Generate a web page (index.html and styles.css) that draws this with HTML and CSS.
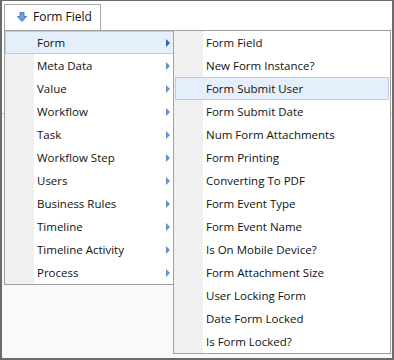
FILE: index.html
```html
<!DOCTYPE html>
<html lang="en">
<head>
  <meta charset="UTF-8">
  <title>Form Field Menu</title>
  <link rel="stylesheet" href="styles.css">
</head>
<body>
<div class="frame">
  <!-- Toolbar with the field picker -->
  <div class="toolbar">
    <button class="tab" type="button">
      <svg class="tab-icon" width="10" height="10" viewBox="0 0 10 10">
        <path d="M3 0.5 H7 V4.5 H9.5 L5 9.5 L0.5 4.5 H3 Z" fill="#6f9ee0" stroke="#4a7cc6" stroke-width="1"/>
      </svg>
      Form Field
    </button>
  </div>
  <div class="panel"></div>

  <!-- Main menu -->
  <ul class="menu main-menu">
    <li class="item active has-sub">Form</li>
    <li class="item has-sub">Meta Data</li>
    <li class="item has-sub">Value</li>
    <li class="item has-sub">Workflow</li>
    <li class="item has-sub">Task</li>
    <li class="item has-sub">Workflow Step</li>
    <li class="item has-sub">Users</li>
    <li class="item has-sub">Business Rules</li>
    <li class="item has-sub">Timeline</li>
    <li class="item has-sub">Timeline Activity</li>
    <li class="item has-sub">Process</li>
  </ul>

  <!-- Sub menu for "Form" -->
  <ul class="menu sub-menu">
    <li class="item">Form Field</li>
    <li class="item">New Form Instance?</li>
    <li class="item hover">Form Submit User</li>
    <li class="item">Form Submit Date</li>
    <li class="item">Num Form Attachments</li>
    <li class="item">Form Printing</li>
    <li class="item">Converting To PDF</li>
    <li class="item">Form Event Type</li>
    <li class="item">Form Event Name</li>
    <li class="item">Is On Mobile Device?</li>
    <li class="item">Form Attachment Size</li>
    <li class="item">User Locking Form</li>
    <li class="item">Date Form Locked</li>
    <li class="item">Is Form Locked?</li>
  </ul>
</div>
</body>
</html>
```

FILE: styles.css
```css
body {
  margin: 0;
  font-family: "Open Sans", "Noto Sans", sans-serif;
  font-size: 11.5px;
  color: #111;
}
.frame {
  position: relative;
  width: 394px;
  height: 360px;
  box-sizing: border-box;
  border: 2px solid #6b6b6b;
  border-top-width: 1px;
  display: flex;
  flex-direction: column;
  background: #fff;
}
.toolbar {
  height: 112px;
  padding: 3px 0 0 2px;
  box-sizing: border-box;
}
.tab {
  display: flex;
  align-items: center;
  gap: 6px;
  width: 97px;
  height: 27px;
  padding: 0 0 2px 12px;
  box-sizing: border-box;
  border: 1px solid #a8a8a8;
  background: #fff;
  font: inherit;
  font-size: 12px;
  color: #111;
}
.tab-icon {
  margin-top: 1px;
}
.panel {
  flex: 1;
  border-top: 1px solid #c4c4c4;
  background: #f9f9f9;
}
.menu {
  position: absolute;
  top: 29px;
  margin: 0;
  padding: 0;
  list-style: none;
  border: 1px solid #a0a0a0;
  background: linear-gradient(to right, #f0f0f0 29px, #fff 29px);
}
.main-menu {
  left: 2px;
  width: 170px;
}
.sub-menu {
  left: 171px;
  width: 216px;
}
.item {
  position: relative;
  height: 23px;
  display: flex;
  align-items: center;
  padding-left: 32px;
  box-sizing: border-box;
}
.item.active,
.item.hover {
  background: #e5effc;
  border: 1px solid #b6cdee;
  padding-left: 31px;
}
.sub-menu .item.hover {
  margin: 0 1px;
  padding-left: 30px;
}
.has-sub::after {
  content: "";
  position: absolute;
  right: 5px;
  top: 8px;
  border-left: 4px solid #6a8fcc;
  border-top: 4px solid transparent;
  border-bottom: 4px solid transparent;
}
.item.active::after {
  top: 7px;
  right: 4px;
  border-left-color: #2f60b5;
}
```
